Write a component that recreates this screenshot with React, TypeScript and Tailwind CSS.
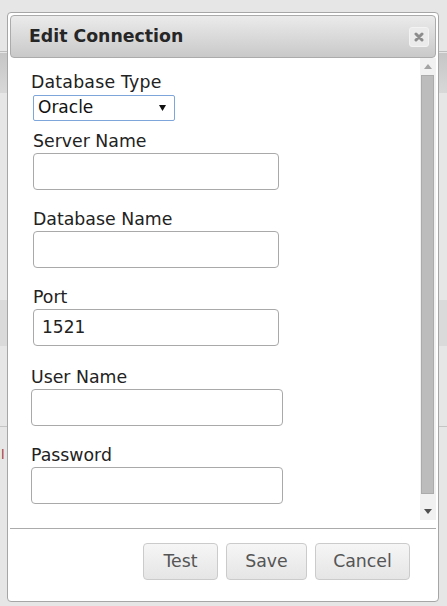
import React from 'react';

const Field = ({ label, value = '', className = '' }: { label: string; value?: string; className?: string }) => (
  <div className={className}>
    <div className="text-[17.33px] leading-[20px] text-[#222]">{label}</div>
    <div className="mt-[2px] h-[37px] border border-[#a9a9a9] rounded-[4px] bg-white flex items-center pl-[8px] text-[17px] text-[#222]">
      {value}
    </div>
  </div>
);

const Button = ({ children, className = '' }: { children: React.ReactNode; className?: string }) => (
  <div
    className={`h-[37px] flex items-center justify-center border border-[#cbcbcb] rounded-[4px] bg-gradient-to-b from-[#f6f6f6] to-[#e5e5e5] text-[17.33px] text-[#555] ${className}`}
  >
    {children}
  </div>
);

const App = () => {
  return (
    <div className="relative w-[447px] h-[606px] overflow-hidden bg-[#e6e6e6] font-['DejaVu_Sans',sans-serif]">
      {/* dimmed page behind the dialog */}
      <div className="flex flex-col">
        <div className="h-[51px]" />
        <div className="h-px bg-[#bdbdbd]" />
        <div className="h-[1px]" />
        <div className="h-[40px] bg-gradient-to-b from-[#c6c6c6] to-[#d8d8d8]" />
        <div className="h-[207px]" />
        <div className="h-[46px] bg-[#dadada]" />
        <div className="h-[80px]" />
        <div className="h-px bg-[#c4c4c4]" />
        <div className="h-[22px]" />
        <div className="pl-[1px] text-[13px] leading-[12px] text-[#a33]">l</div>
      </div>

      {/* dialog */}
      <div className="absolute left-[7px] top-[12px] w-[432px] h-[590px] border border-[#a6a6a6] rounded-[4px] bg-white p-[2px] flex flex-col">
        <div className="h-[43px] shrink-0 border border-[#ababab] rounded-[4px] bg-gradient-to-b from-[#ebebeb] to-[#c9c9c9] flex items-center justify-between pl-[18px] pr-[6px]">
          <span className="text-[17.33px] font-bold text-[#262626]">Edit Connection</span>
          <div className="w-[20px] h-[20px] rounded-[3px] bg-[#ebebeb] border border-[#f3f3f3] flex items-center justify-center">
            <svg width="10" height="10" viewBox="0 0 10 10">
              <path d="M2 2 L8 8 M8 2 L2 8" stroke="#8c8c8c" strokeWidth="3" strokeLinecap="round" />
            </svg>
          </div>
        </div>

        <div className="h-[462px] shrink-0 flex">
          <div className="flex-1 pl-[21px] pt-[14px]">
            <div className="text-[17.33px] leading-[20px] text-[#222] tracking-[0.2px]">Database Type</div>
            <div className="mt-[3px] ml-[2px] w-[142px] h-[26px] border border-[#7fa6da] rounded-[2px] flex items-center justify-between pl-[4px] pr-[8px] text-[17px] text-[#111]">
              <span>Oracle</span>
              <svg width="7" height="6" viewBox="0 0 7 6">
                <path d="M0 0 L7 0 L3.5 6 Z" fill="#111" />
              </svg>
            </div>
            <Field label="Server Name" className="mt-[10px] ml-[2px] w-[246px]" />
            <Field label="Database Name" className="mt-[19px] ml-[2px] w-[246px]" />
            <Field label="Port" value="1521" className="mt-[19px] ml-[2px] w-[246px]" />
            <Field label="User Name" className="mt-[21px] w-[252px]" />
            <Field label="Password" className="mt-[19px] w-[252px]" />
          </div>

          {/* scrollbar */}
          <div className="w-[16px] bg-[#f1f1f1] flex flex-col">
            <div className="h-[17px] flex items-center justify-center">
              <svg width="8" height="5" viewBox="0 0 8 5">
                <path d="M0 5 L4 0 L8 5 Z" fill="#a3a3a3" />
              </svg>
            </div>
            <div className="h-[419px] ml-[1px] w-[13px] bg-[#bcbcbc] border border-[#ababab]" />
            <div className="flex-1" />
            <div className="h-[17px] flex items-center justify-center">
              <svg width="8" height="5" viewBox="0 0 8 5">
                <path d="M0 0 L8 0 L4 5 Z" fill="#505050" />
              </svg>
            </div>
          </div>
        </div>

        <div className="mt-[8px] border-t border-[#ababab] pt-[14px] flex justify-end gap-[8px] pr-[26px]">
          <Button className="w-[75px]">Test</Button>
          <Button className="w-[81px]">Save</Button>
          <Button className="w-[95px]">Cancel</Button>
        </div>
      </div>
    </div>
  );
};

export default App;
